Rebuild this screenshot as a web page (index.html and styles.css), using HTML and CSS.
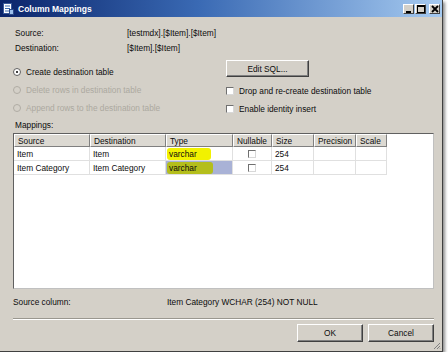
FILE: index.html
```html
<!DOCTYPE html>
<html lang="en">
<head>
  <meta charset="UTF-8" />
  <title>Column Mappings</title>
  <link rel="stylesheet" href="styles.css">
</head>
<body>

  <div class="window">
    <!-- Title bar -->
    <div class="titlebar">
      <svg class="title-icon" width="11" height="12" viewBox="0 0 11 12">
        <rect x="0.5" y="0.5" width="8" height="10" fill="#fff" stroke="#3a5a9a"/>
        <rect x="2" y="2.5" width="5" height="1" fill="#3a6ab0"/>
        <rect x="2" y="5" width="5" height="1" fill="#3a6ab0"/>
        <rect x="2" y="7.5" width="4" height="1" fill="#3a6ab0"/>
        <rect x="6.5" y="6.5" width="4" height="5" fill="#9cc0ec" stroke="#2a4a8a"/>
      </svg>
      <span class="title">Column Mappings</span>
      <div class="title-buttons">
        <span class="tbtn"><svg width="8" height="8" viewBox="0 0 8 8"><rect x="1" y="6" width="5" height="2" fill="#000"/></svg></span>
        <span class="tbtn"><svg width="8" height="8" viewBox="0 0 8 8"><rect x="0.5" y="0.5" width="7" height="7" fill="none" stroke="#000"/><rect x="0" y="0" width="8" height="2" fill="#000"/></svg></span>
        <span class="tbtn close"><svg width="8" height="8" viewBox="0 0 8 8"><path d="M1 1 L7 7 M7 1 L1 7" stroke="#000" stroke-width="1.8"/></svg></span>
      </div>
    </div>

    <div class="content">
      <div class="info">
        <div class="info-row"><span class="info-label">Source:</span><span>[testmdx].[$Item].[$Item]</span></div>
        <div class="info-row"><span class="info-label">Destination:</span><span>[$Item].[$Item]</span></div>
      </div>

      <div class="options">
        <div class="opt-left">
          <label class="radio-row"><span class="radio checked"></span>Create destination table</label>
          <label class="radio-row disabled"><span class="radio"></span>Delete rows in destination table</label>
          <label class="radio-row disabled"><span class="radio"></span>Append rows to the destination table</label>
        </div>
        <div class="opt-right">
          <button class="btn edit-sql">Edit SQL...</button>
          <label class="check-row"><span class="check"></span>Drop and re-create destination table</label>
          <label class="check-row"><span class="check"></span>Enable identity insert</label>
        </div>
      </div>

      <div class="mappings-label">Mappings:</div>

      <div class="grid">
        <div class="grid-row header">
          <div class="cell">Source</div>
          <div class="cell">Destination</div>
          <div class="cell">Type</div>
          <div class="cell">Nullable</div>
          <div class="cell">Size</div>
          <div class="cell">Precision</div>
          <div class="cell">Scale</div>
        </div>
        <div class="grid-row">
          <div class="cell">Item</div>
          <div class="cell">Item</div>
          <div class="cell type"><span class="marker">varchar</span></div>
          <div class="cell center"><span class="check small"></span></div>
          <div class="cell">254</div>
          <div class="cell"></div>
          <div class="cell"></div>
        </div>
        <div class="grid-row">
          <div class="cell">Item Category</div>
          <div class="cell">Item Category</div>
          <div class="cell type selected"><span class="marker dark">varchar</span></div>
          <div class="cell center"><span class="check small"></span></div>
          <div class="cell">254</div>
          <div class="cell"></div>
          <div class="cell"></div>
        </div>
      </div>

      <div class="source-col">
        <span class="info-label wide">Source column:</span>
        <span>Item Category WCHAR (254) NOT NULL</span>
      </div>

      <div class="separator"></div>

      <div class="actions">
        <button class="btn">OK</button>
        <button class="btn">Cancel</button>
      </div>
    </div>

    <svg class="grip" width="8" height="8" viewBox="0 0 8 8">
      <path d="M7 1 L1 7 M7 4 L4 7 M7 6.5 L6.5 7" stroke="#808080" stroke-width="1"/>
    </svg>
  </div>

</body>
</html>
```

FILE: styles.css
```css
/* Reset */
* { margin: 0; padding: 0; box-sizing: border-box; }

body {
  background: #ffffff;
  font-family: 'Liberation Sans', Arial, sans-serif;
  font-size: 8.3px;
  color: #0c0c0c;
}

/* Dialog window */
.window {
  position: relative;
  width: 443px;
  height: 352px;
  background: #d4d0c8;
  border-right: 1px solid #404040;
  border-bottom: 1px solid #404040;
  box-shadow: 2px 2px 3px rgba(0,0,0,0.45);
  display: flex;
  flex-direction: column;
}

.titlebar {
  height: 17px;
  display: flex;
  align-items: center;
  padding-left: 3px;
  background: linear-gradient(to right, #0a246a 0%, #3a6ab4 45%, #a6caf0 100%);
}
.title-icon { margin-right: 4px; }
.title {
  color: #ffffff;
  font-weight: bold;
  font-size: 8.5px;
}
.title-buttons {
  margin-left: auto;
  margin-right: 2px;
  display: flex;
  gap: 1px;
}
.tbtn {
  width: 11px;
  height: 10px;
  display: flex;
  align-items: center;
  justify-content: center;
  background: #d4d0c8;
  border: 1px solid;
  border-color: #ffffff #404040 #404040 #ffffff;
}
.tbtn.close { margin-left: 2px; }

.content {
  flex: 1;
  display: flex;
  flex-direction: column;
  padding: 8px 9px 0 13px;
}

.info-row {
  height: 15px;
  display: flex;
  align-items: center;
  padding-left: 2px;
}
.info-label { width: 112px; }
.info-label.wide { width: 154px; }

/* Options */
.options { display: flex; }
.opt-left {
  width: 213px;
  padding-top: 8px;
}
.opt-right { padding-top: 5px; }

.radio-row, .check-row {
  height: 18px;
  display: flex;
  align-items: center;
}
.radio-row.disabled { color: #aca9a0; }
.radio {
  width: 8px;
  height: 8px;
  border-radius: 50%;
  border: 1px solid #606060;
  background: #ffffff;
  margin-right: 5px;
  position: relative;
}
.radio.checked::after {
  content: '';
  position: absolute;
  left: 2px;
  top: 2px;
  width: 2px;
  height: 2px;
  border-radius: 50%;
  background: #000;
}
.radio-row.disabled .radio { border-color: #b0aca4; background: #d4d0c8; }

.check {
  width: 8px;
  height: 8px;
  background: #ffffff;
  border: 1px solid;
  border-color: #707070 #d8d8d8 #d8d8d8 #707070;
  margin-right: 5px;
}
.check.small { margin-right: 0; }

.btn {
  font-family: inherit;
  font-size: 8.3px;
  color: #0c0c0c;
  background: #d4d0c8;
  border: 1px solid;
  border-color: #ffffff #404040 #404040 #ffffff;
  box-shadow: inset -1px -1px 0 #808080;
  height: 18px;
  width: 66px;
}
.edit-sql {
  width: 83px;
  height: 17px;
  margin-bottom: 5px;
}

.mappings-label {
  height: 14px;
  display: flex;
  align-items: center;
  padding-left: 2px;
}

/* Mappings grid */
.grid {
  margin-top: 1px;
  height: 156px;
  width: 421px;
  background: #ffffff;
  border: 1px solid #606060;
  border-right-color: #c0c0c0;
  border-bottom-color: #c0c0c0;
}
.grid-row {
  display: grid;
  grid-template-columns: 76px 76px 67px 39px 42px 42px 31px;
  height: 14px;
}
.grid-row.header { height: 13px; }
.cell {
  display: flex;
  align-items: center;
  padding-left: 3px;
  border-right: 1px solid #e0e0e0;
  border-bottom: 1px solid #e0e0e0;
  white-space: nowrap;
  overflow: hidden;
}
.header .cell {
  background: #dcd9d2;
  border-top: 1px solid #ffffff;
  border-left: 1px solid #ffffff;
  border-right: 1px solid #808080;
  border-bottom: 1px solid #808080;
}
.cell.center { justify-content: center; padding-left: 0; }
.cell.type { padding-left: 1px; }
.cell.selected { background: #a9b2d6; }
.marker {
  background: #f2f200;
  padding: 0 14px 0 2px;
  border-radius: 3px;
  height: 12px;
  display: flex;
  align-items: center;
}
.marker.dark { background: #b4be1c; padding-right: 16px; }

.source-col {
  margin-top: 6px;
  height: 14px;
  display: flex;
  align-items: center;
}

.separator {
  margin-top: 9px;
  width: 421px;
  border-top: 1px solid #9a978f;
  border-bottom: 1px solid #ffffff;
}

.actions {
  margin-top: 4px;
  width: 421px;
  display: flex;
  justify-content: flex-end;
  gap: 5px;
}

.grip {
  position: absolute;
  right: 1px;
  bottom: 1px;
}
```
